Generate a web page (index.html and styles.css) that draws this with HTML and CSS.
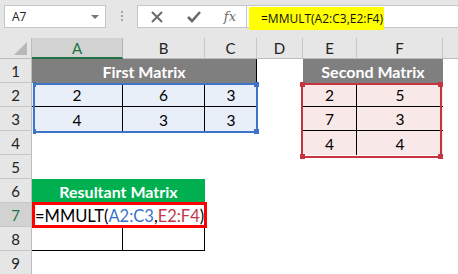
FILE: index.html
```html
<!DOCTYPE html>
<html lang="en">
<head>
    <meta charset="UTF-8">
    <title>MMULT</title>
    <link rel="stylesheet" href="styles.css">
</head>
<body>
    <div class="topbar">
        <div class="namebox">
            <span>A7</span>
            <span class="arrow"></span>
        </div>
        <div class="dots"><i></i><i></i><i></i></div>
        <div class="fxbox">
            <svg width="14" height="14" viewBox="0 0 14 14"><path d="M2 2 L12 12 M12 2 L2 12" stroke="#6b6b6b" stroke-width="2" fill="none"/></svg>
            <svg width="16" height="14" viewBox="0 0 16 14"><path d="M2 7 L6 11 L14 2" stroke="#6b6b6b" stroke-width="2.6" fill="none"/></svg>
            <span class="fx">fx</span>
        </div>
        <div class="formula">
            <span class="hl">=MMULT(A2:C3,E2:F4)</span>
        </div>
    </div>

    <div class="sheet">
        <div class="corner"><span class="tri"></span></div>
        <div class="ch sel">A</div>
        <div class="ch">B</div>
        <div class="ch">C</div>
        <div class="ch">D</div>
        <div class="ch">E</div>
        <div class="ch">F</div>
        <div class="ch last"></div>

        <div class="rh">1</div>
        <div class="title gray span3 edge">First Matrix</div>
        <div class="c"></div>
        <div class="title gray span2">Second Matrix</div>
        <div class="c"></div>

        <div class="rh">2</div>
        <div class="c blue br bb">2</div>
        <div class="c blue br bb">6</div>
        <div class="c blue bb">3</div>
        <div class="c"></div>
        <div class="c pink br bb">2</div>
        <div class="c pink bb">5</div>
        <div class="c"></div>

        <div class="rh">3</div>
        <div class="c blue br">4</div>
        <div class="c blue br">3</div>
        <div class="c blue">3</div>
        <div class="c"></div>
        <div class="c pink br bb">7</div>
        <div class="c pink bb">3</div>
        <div class="c"></div>

        <div class="rh">4</div>
        <div class="c"></div>
        <div class="c"></div>
        <div class="c"></div>
        <div class="c"></div>
        <div class="c pink br">4</div>
        <div class="c pink">4</div>
        <div class="c"></div>

        <div class="rh">5</div>
        <div class="c"></div><div class="c"></div><div class="c"></div><div class="c"></div><div class="c"></div><div class="c"></div><div class="c"></div>

        <div class="rh">6</div>
        <div class="title green span2">Resultant Matrix</div>
        <div class="c"></div><div class="c"></div><div class="c"></div><div class="c"></div><div class="c"></div>

        <div class="rh rsel">7</div>
        <div class="c span2 typed">=MMULT(<span class="ref-a">A2:C3</span>,<span class="ref-e">E2:F4</span>)</div>
        <div class="c"></div><div class="c"></div><div class="c"></div><div class="c"></div><div class="c"></div>

        <div class="rh">8</div>
        <div class="c br bb"></div>
        <div class="c br bb"></div>
        <div class="c"></div><div class="c"></div><div class="c"></div><div class="c"></div><div class="c"></div>

        <div class="rh">9</div>
        <div class="c"></div><div class="c"></div><div class="c"></div><div class="c"></div><div class="c"></div><div class="c"></div><div class="c"></div>

        <!-- selection boxes drawn over the cells -->
        <div class="range range-a">
            <i class="h tl"></i><i class="h tr"></i><i class="h bl"></i><i class="h brh"></i>
        </div>
        <div class="range range-e">
            <i class="h tl"></i><i class="h tr"></i><i class="h bl"></i><i class="h brh"></i>
        </div>
        <div class="active"></div>
    </div>
</body>
</html>
```

FILE: styles.css
```css
* {
    margin: 0;
    padding: 0;
    box-sizing: border-box;
}

body {
    width: 458px;
    height: 274px;
    overflow: hidden;
    background: #ffffff;
    font-family: Lato, 'Open Sans', sans-serif;
    color: #000;
}

/* formula bar */

.topbar {
    height: 38px;
    background: #e6e6e6;
    display: flex;
    align-items: flex-start;
    padding-top: 5px;
    padding-left: 4px;
}

.namebox {
    width: 102px;
    height: 23px;
    background: #fff;
    border: 1px solid #c6c6c6;
    display: flex;
    align-items: center;
    justify-content: space-between;
    padding: 0 6px 0 7px;
    font-family: 'Open Sans', sans-serif;
    font-size: 12px;
    color: #222;
}

.arrow {
    width: 0;
    height: 0;
    border-left: 4px solid transparent;
    border-right: 4px solid transparent;
    border-top: 4px solid #777;
}

.dots {
    width: 31px;
    display: flex;
    flex-direction: column;
    align-items: center;
    gap: 2px;
    padding-top: 6px;
}

.dots i {
    width: 2px;
    height: 2px;
    background: #a6a6a6;
}

.fxbox {
    width: 110px;
    height: 23px;
    background: #fff;
    border: 1px solid #c6c6c6;
    display: flex;
    align-items: center;
    justify-content: space-between;
    padding: 0 10px 0 12px;
}

.fx {
    font-family: 'DejaVu Serif', 'Liberation Serif', serif;
    font-style: italic;
    font-size: 13px;
    color: #6b6b6b;
}

.formula {
    flex: 1;
    height: 23px;
    background: #fff;
    border-top: 1px solid #c6c6c6;
    border-bottom: 1px solid #c6c6c6;
    padding-left: 2px;
}

.hl {
    display: inline-flex;
    align-items: center;
    width: 135px;
    height: 23px;
    margin-top: 1px;
    padding-left: 12px;
    background: #ffff00;
    font-family: 'Open Sans', sans-serif;
    font-size: 12px;
    color: #111;
}

/* sheet grid */

.sheet {
    display: grid;
    grid-template-columns: 32px 91px 82px 52px 46px 54px 86px 1fr;
    grid-template-rows: 21px repeat(9, 24px);
    position: relative;
}

.corner {
    background: #e6e6e6;
    border-right: 1px solid #bdbdbd;
    border-bottom: 1px solid #bdbdbd;
    position: relative;
}

.tri {
    position: absolute;
    right: 4px;
    bottom: 3px;
    width: 0;
    height: 0;
    border-left: 13px solid transparent;
    border-bottom: 13px solid #b8b8b8;
}

.ch {
    background: #e6e6e6;
    border-right: 1px solid #c6c6c6;
    border-bottom: 1px solid #bdbdbd;
    display: flex;
    align-items: center;
    justify-content: center;
    font-size: 15px;
    color: #222;
}

.ch.last {
    border-right: none;
}

.ch.sel {
    background: #d2d2d2;
    color: #217346;
    border-bottom: 2px solid #217346;
    border-right-color: #b0b0b0;
}

.rh {
    background: #e6e6e6;
    border-right: 1px solid #bdbdbd;
    border-bottom: 1px solid #c6c6c6;
    display: flex;
    align-items: flex-end;
    justify-content: center;
    padding-bottom: 2px;
    font-size: 15px;
    color: #222;
}

.rh.rsel {
    background: #d2d2d2;
    color: #217346;
}

.c {
    display: flex;
    align-items: flex-end;
    justify-content: center;
    padding-bottom: 2px;
    font-size: 15.5px;
}

.span2 {
    grid-column: span 2;
}

.span3 {
    grid-column: span 3;
}

.title {
    display: flex;
    align-items: flex-end;
    justify-content: center;
    padding-bottom: 2px;
    font-size: 16px;
    font-weight: bold;
    color: #fff;
}

.gray {
    background: #7f7f7f;
}

.green {
    background: #00b050;
}

.edge {
    border-right: 1px solid #000;
}

.blue {
    background: #e8eff9;
}

.pink {
    background: #f9e8e8;
}

.br {
    border-right: 1px solid #000;
}

.bb {
    border-bottom: 1px solid #000;
}

.typed {
    justify-content: flex-start;
    padding-left: 3px;
    padding-bottom: 1px;
    font-size: 16.5px;
    white-space: nowrap;
}

.ref-a {
    color: #3b73c8;
}

.ref-e {
    color: #c0394a;
}

/* selection outlines, laid over their grid areas */

.range,
.active {
    position: absolute;
    pointer-events: none;
}

.range {
    border: 2px solid;
}

.range-a {
    grid-column: 2 / 5;
    grid-row: 3 / 5;
    border-color: #3d73c9;
    top: 0;
    left: 1px;
    right: -1px;
    bottom: -2px;
}

.range-e {
    grid-column: 6 / 8;
    grid-row: 3 / 6;
    border-color: #c6343f;
    top: 0;
    left: -2px;
    right: 1px;
    bottom: -3px;
}

.h {
    position: absolute;
    width: 5px;
    height: 5px;
}

.range-a .h {
    background: #3d73c9;
}

.range-e .h {
    background: #c6343f;
}

.tl { left: -3px; top: -3px; }
.tr { right: -3px; top: -3px; }
.bl { left: -3px; bottom: -3px; }
.brh { right: -3px; bottom: -3px; }

.range-a .tl,
.range-a .bl {
    left: -2px;
    width: 3px;
}

.active {
    grid-column: 2 / 4;
    grid-row: 8 / 9;
    border: 3px solid #ff0000;
    top: -1px;
    left: 0;
    right: -2px;
    bottom: -1px;
}
```
